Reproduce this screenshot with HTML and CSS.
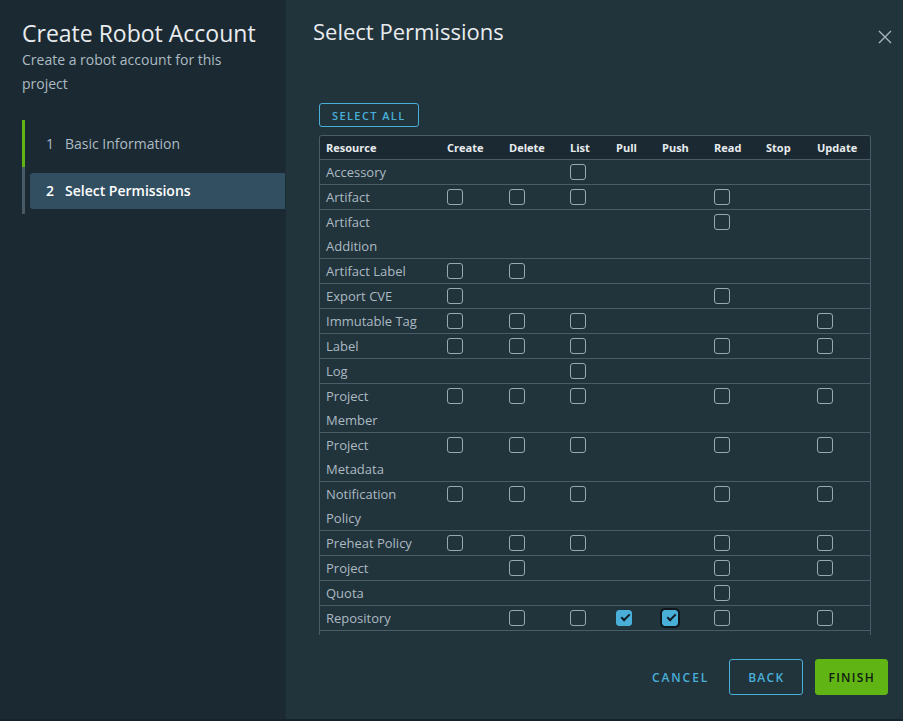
FILE: index.html
```html
<!DOCTYPE html>
<html>
<head>
<meta charset="utf-8">
<link rel="stylesheet" href="styles.css">
</head>
<body>
<div class="modal">
  <aside class="sidebar">
    <h1 class="side-title">Create Robot Account</h1>
    <p class="side-sub">Create a robot account for this project</p>
    <ol class="steps">
      <li class="step done"><span class="num">1</span>Basic Information</li>
      <li class="step current"><div class="step-inner"><span class="num">2</span>Select Permissions</div></li>
    </ol>
  </aside>
  <main class="main">
    <header class="main-head">
      <h2 class="main-title">Select Permissions</h2>
      <svg class="close" width="14" height="14" viewBox="0 0 14 14"><path d="M1 1 L13 13 M13 1 L1 13" stroke="#a9b6be" stroke-width="1.4" fill="none"/></svg>
    </header>
    <section class="content">
      <button class="btn-outline small">SELECT ALL</button>
      <div class="grid-wrap">
        <table class="grid">
          <colgroup>
            <col class="c-res"><col class="c-create"><col class="c-delete"><col class="c-list"><col class="c-pull"><col class="c-push"><col class="c-read"><col class="c-stop"><col class="c-update">
          </colgroup>
          <thead>
            <tr><th>Resource</th><th>Create</th><th>Delete</th><th>List</th><th>Pull</th><th>Push</th><th>Read</th><th>Stop</th><th>Update</th></tr>
          </thead>
          <tbody>
            <tr><td>Accessory</td><td></td><td></td><td><span class="cb"></span></td><td></td><td></td><td></td><td></td><td></td></tr>
            <tr><td>Artifact</td><td><span class="cb"></span></td><td><span class="cb"></span></td><td><span class="cb"></span></td><td></td><td></td><td><span class="cb"></span></td><td></td><td></td></tr>
            <tr><td>Artifact<br>Addition</td><td></td><td></td><td></td><td></td><td></td><td><span class="cb"></span></td><td></td><td></td></tr>
            <tr><td>Artifact Label</td><td><span class="cb"></span></td><td><span class="cb"></span></td><td></td><td></td><td></td><td></td><td></td><td></td></tr>
            <tr><td>Export CVE</td><td><span class="cb"></span></td><td></td><td></td><td></td><td></td><td><span class="cb"></span></td><td></td><td></td></tr>
            <tr><td>Immutable Tag</td><td><span class="cb"></span></td><td><span class="cb"></span></td><td><span class="cb"></span></td><td></td><td></td><td></td><td></td><td><span class="cb"></span></td></tr>
            <tr><td>Label</td><td><span class="cb"></span></td><td><span class="cb"></span></td><td><span class="cb"></span></td><td></td><td></td><td><span class="cb"></span></td><td></td><td><span class="cb"></span></td></tr>
            <tr><td>Log</td><td></td><td></td><td><span class="cb"></span></td><td></td><td></td><td></td><td></td><td></td></tr>
            <tr><td>Project<br>Member</td><td><span class="cb"></span></td><td><span class="cb"></span></td><td><span class="cb"></span></td><td></td><td></td><td><span class="cb"></span></td><td></td><td><span class="cb"></span></td></tr>
            <tr><td>Project<br>Metadata</td><td><span class="cb"></span></td><td><span class="cb"></span></td><td><span class="cb"></span></td><td></td><td></td><td><span class="cb"></span></td><td></td><td><span class="cb"></span></td></tr>
            <tr><td>Notification<br>Policy</td><td><span class="cb"></span></td><td><span class="cb"></span></td><td><span class="cb"></span></td><td></td><td></td><td><span class="cb"></span></td><td></td><td><span class="cb"></span></td></tr>
            <tr><td>Preheat Policy</td><td><span class="cb"></span></td><td><span class="cb"></span></td><td><span class="cb"></span></td><td></td><td></td><td><span class="cb"></span></td><td></td><td><span class="cb"></span></td></tr>
            <tr><td>Project</td><td></td><td><span class="cb"></span></td><td></td><td></td><td></td><td><span class="cb"></span></td><td></td><td><span class="cb"></span></td></tr>
            <tr><td>Quota</td><td></td><td></td><td></td><td></td><td></td><td><span class="cb"></span></td><td></td><td></td></tr>
            <tr><td>Repository</td><td></td><td><span class="cb"></span></td><td><span class="cb"></span></td><td><span class="cb checked"></span></td><td><span class="cb checked focus"></span></td><td><span class="cb"></span></td><td></td><td><span class="cb"></span></td></tr>
          </tbody>
        </table>
      </div>
    </section>
    <footer class="foot">
      <button class="btn-flat">CANCEL</button>
      <button class="btn-outline">BACK</button>
      <button class="btn-success">FINISH</button>
    </footer>
  </main>
</div>
</body>
</html>
```
FILE: styles.css
```css
* { box-sizing: border-box; }
html, body { margin: 0; padding: 0; }
body {
  width: 903px;
  height: 721px;
  overflow: hidden;
  background: #17232a;
  font-family: "Open Sans", "Lato", sans-serif;
  color: #acbac3;
}
.modal {
  display: flex;
  height: 719px;
  background: #21333b;
}
.sidebar {
  width: 286px;
  flex: none;
  background: #1b2a32;
  padding: 20px 0 0 22px;
  border-right: 1px solid #1e2d35;
}
.side-title {
  margin: 0;
  font-weight: 400;
  font-size: 23px;
  line-height: 26px;
  color: #e9ecef;
}
.side-sub {
  margin: 2px 0 0;
  font-size: 14px;
  line-height: 24px;
  color: #acbac3;
  width: 230px;
}
.steps {
  list-style: none;
  margin: 24px 0 0;
  padding: 0;
}
.step {
  height: 47px;
  font-size: 14px;
  display: flex;
  align-items: center;
  border-left: 3px solid #495a67;
}
.step.done {
  border-left-color: #60b515;
  padding-left: 21px;
  color: #acbac3;
}
.step.current {
  padding-left: 5px;
}
.step-inner {
  flex: 1;
  height: 36px;
  display: flex;
  align-items: center;
  background: #324f61;
  border-radius: 3px 0 0 3px;
  padding-left: 16px;
  color: #ffffff;
  font-weight: 600;
}
.num { display: inline-block; width: 19px; }
.main {
  flex: 1;
  display: flex;
  flex-direction: column;
}
.main-head {
  display: flex;
  justify-content: space-between;
  align-items: flex-start;
  padding: 16px 11px 0 27px;
}
.main-title {
  margin: 0;
  font-weight: 400;
  font-size: 22px;
  line-height: 30px;
  color: #e9ecef;
}
.close { margin-top: 14px; }
.content {
  padding: 57px 0 0 33px;
  flex: 1;
}
button {
  font-family: inherit;
  cursor: pointer;
}
.btn-outline {
  background: transparent;
  border: 1px solid #49afd9;
  color: #49afd9;
  border-radius: 3px;
  font-size: 12px;
  font-weight: 600;
  letter-spacing: 1.3px;
  height: 36px;
  padding: 0 18px;
}
.btn-outline.small {
  height: 24px;
  font-size: 11px;
  padding: 0 12px;
  display: block;
  letter-spacing: 1.4px;
}
.grid-wrap {
  margin-top: 8px;
  width: 552px;
  height: 500px;
  overflow: hidden;
  border: 1px solid #485c69;
  border-bottom: none;
  border-radius: 3px 3px 0 0;
}
.grid {
  border-collapse: collapse;
  table-layout: fixed;
  width: 551px;
}
.c-res { width: 121px; }
.c-create { width: 62px; }
.c-delete { width: 61px; }
.c-list { width: 46px; }
.c-pull { width: 46px; }
.c-push { width: 52px; }
.c-read { width: 52px; }
.c-stop { width: 51px; }
.c-update { width: 60px; }
.grid th {
  background: #1b2a32;
  color: #e9ecef;
  font-size: 11px;
  font-weight: 700;
  text-align: left;
  height: 23px;
  padding: 0 6px;
  border-bottom: 1px solid #485c69;
}
.grid td {
  font-size: 13px;
  line-height: 24px;
  vertical-align: top;
  padding: 0 6px;
  border-bottom: 1px solid #485c69;
  color: #acbac3;
}
.cb {
  display: block;
  width: 16px;
  height: 16px;
  margin-top: 4px;
  border: 1px solid #9aa8b1;
  border-radius: 3px;
  position: relative;
}
.cb.checked {
  background: #49afd9;
  border-color: #49afd9;
}
.cb.checked::after {
  content: "";
  position: absolute;
  left: 4px;
  top: 3px;
  width: 7px;
  height: 3px;
  border-left: 2px solid #111b21;
  border-bottom: 2px solid #111b21;
  transform: rotate(-45deg);
}
.cb.focus {
  box-shadow: 0 0 0 2px #0f171c;
}
.foot {
  display: flex;
  justify-content: flex-end;
  align-items: center;
  gap: 12px;
  padding: 0 15px 24px 0;
}
.btn-flat {
  background: transparent;
  border: none;
  color: #49afd9;
  font-size: 12px;
  font-weight: 600;
  letter-spacing: 1.9px;
  height: 36px;
  padding: 0 8px;
}
.btn-success {
  background: #60b515;
  border: 1px solid #60b515;
  color: #0f1a12;
  border-radius: 3px;
  font-size: 12px;
  font-weight: 600;
  letter-spacing: 1.3px;
  height: 36px;
  padding: 0 12px;
}
```
